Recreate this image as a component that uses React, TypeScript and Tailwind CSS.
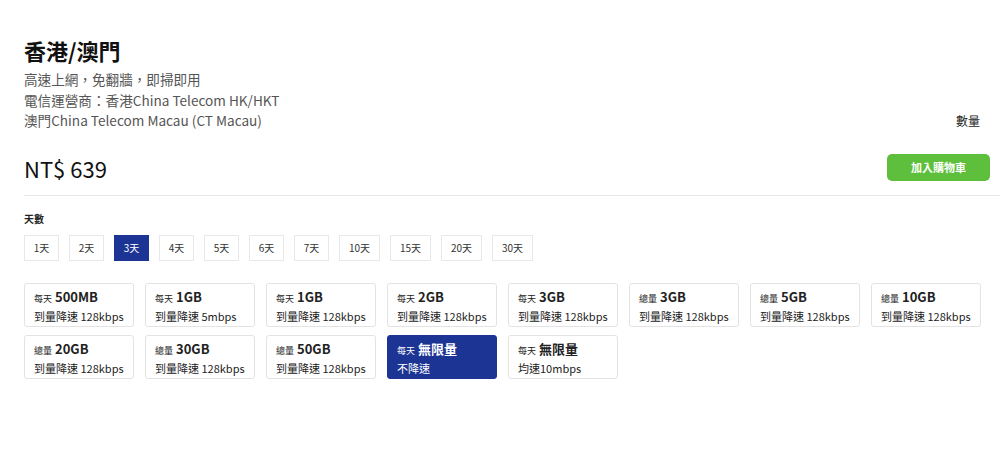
import React, { useState } from 'react';

const days = ['1天', '2天', '3天', '4天', '5天', '6天', '7天', '10天', '15天', '20天', '30天'];

const plans = [
  { prefix: '每天', amount: '500MB', note: '到量降速 128kbps' },
  { prefix: '每天', amount: '1GB', note: '到量降速 5mbps' },
  { prefix: '每天', amount: '1GB', note: '到量降速 128kbps' },
  { prefix: '每天', amount: '2GB', note: '到量降速 128kbps' },
  { prefix: '每天', amount: '3GB', note: '到量降速 128kbps' },
  { prefix: '總量', amount: '3GB', note: '到量降速 128kbps' },
  { prefix: '總量', amount: '5GB', note: '到量降速 128kbps' },
  { prefix: '總量', amount: '10GB', note: '到量降速 128kbps' },
  { prefix: '總量', amount: '20GB', note: '到量降速 128kbps' },
  { prefix: '總量', amount: '30GB', note: '到量降速 128kbps' },
  { prefix: '總量', amount: '50GB', note: '到量降速 128kbps' },
  { prefix: '每天', amount: '無限量', note: '不降速' },
  { prefix: '每天', amount: '無限量', note: '均速10mbps' },
];

export default function App() {
  const [day, setDay] = useState('3天');
  const [plan, setPlan] = useState(11);

  return (
    <div
      className="w-[1000px] h-[450px] bg-white text-[#222] pl-6 pt-[34px]"
      style={{ fontFamily: '"Noto Sans CJK TC", "Noto Sans", sans-serif' }}
    >
      {/* Header */}
      <h1 className="text-[22px] font-bold leading-[32px] text-[#111]">香港/澳門</h1>
      <div className="mt-[3px] text-[13.6px] leading-[20.5px] text-[#555]">
        <p>高速上網，免翻牆，即掃即用</p>
        <p>電信運營商：香港China Telecom HK/HKT</p>
        <div className="flex items-end justify-between pr-[20px]">
          <p>澳門China Telecom Macau (CT Macau)</p>
          <span className="text-[12px] text-[#222] leading-[16px] mb-[2px]">數量</span>
        </div>
      </div>

      {/* Price row */}
      <div className="mt-[22px] flex items-center justify-between pr-[10px]">
        <span className="text-[22px] leading-[30px] text-[#111]">NT$ 639</span>
        <button className="w-[103px] h-[27px] rounded-[5px] bg-[#5dbf3b] text-white text-[11px] font-bold">
          加入購物車
        </button>
      </div>
      <div className="mt-[12px] h-px bg-[#e6e6e6]" />

      {/* Days */}
      <div className="mt-[16px] text-[10px] font-bold leading-[14px]">天數</div>
      <div className="mt-[9px] flex gap-[10px]">
        {days.map((d) => (
          <button
            key={d}
            onClick={() => setDay(d)}
            className={
              'h-[26px] text-[10px] border ' +
              (d.length > 2 ? 'w-[41px] ' : 'w-[35px] ') +
              (day === d
                ? 'bg-[#1c3494] border-[#1c3494] text-white'
                : 'bg-white border-[#e8e8e8] text-[#333]')
            }
          >
            {d}
          </button>
        ))}
      </div>

      {/* Plans */}
      <div className="mt-[22px] grid grid-cols-[repeat(8,110px)] gap-x-[11px] gap-y-[8px]">
        {plans.map((p, i) => (
          <button
            key={i}
            onClick={() => setPlan(i)}
            className={
              'h-[44px] rounded-[3px] border text-left pl-[9px] pt-[4px] ' +
              (plan === i
                ? 'bg-[#1c3494] border-[#1c3494] text-white'
                : 'bg-white border-[#e3e3e3] text-[#222]')
            }
          >
            <div className="flex items-baseline leading-[18px]">
              <span className="text-[9px] mr-[3px]">{p.prefix}</span>
              <span className="text-[13px] font-bold">{p.amount}</span>
            </div>
            <div className="text-[11px] leading-[17px]">{p.note}</div>
          </button>
        ))}
      </div>
    </div>
  );
}
